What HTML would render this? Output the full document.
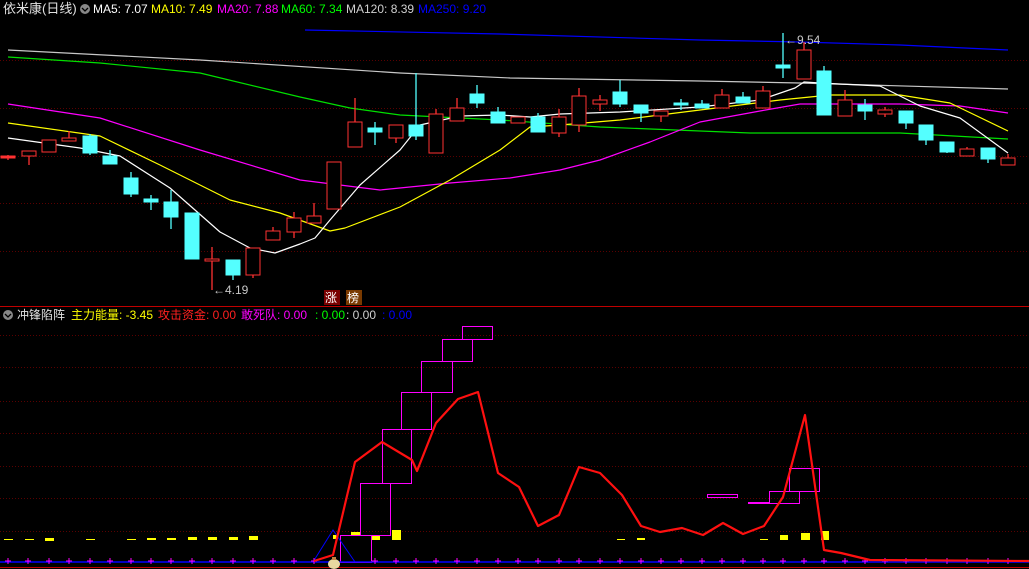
<!DOCTYPE html>
<html><head><meta charset="utf-8"><style>
html,body{margin:0;padding:0;background:#000;width:1029px;height:569px;overflow:hidden}
svg{display:block}
text{font-family:"Liberation Sans","Noto Sans CJK SC",sans-serif}
rect{shape-rendering:crispEdges}
</style></head><body>
<svg width="1029" height="569" viewBox="0 0 1029 569" xmlns="http://www.w3.org/2000/svg">
<rect width="1029" height="569" fill="#000"/>
<g stroke="#5a0000" stroke-width="1" stroke-dasharray="1,2">
<line x1="0" y1="60.5" x2="1029" y2="60.5"/><line x1="0" y1="108.5" x2="1029" y2="108.5"/>
<line x1="0" y1="156.5" x2="1029" y2="156.5"/><line x1="0" y1="203.5" x2="1029" y2="203.5"/>
<line x1="0" y1="251.5" x2="1029" y2="251.5"/>
<line x1="0" y1="335.5" x2="1029" y2="335.5"/><line x1="0" y1="367.5" x2="1029" y2="367.5"/>
<line x1="0" y1="401.5" x2="1029" y2="401.5"/><line x1="0" y1="433.5" x2="1029" y2="433.5"/>
<line x1="0" y1="466.5" x2="1029" y2="466.5"/><line x1="0" y1="498.5" x2="1029" y2="498.5"/>
<line x1="0" y1="531.5" x2="1029" y2="531.5"/>
</g>
<line x1="0" y1="306.5" x2="1029" y2="306.5" stroke="#c00000"/>
<line x1="0" y1="567.5" x2="1029" y2="567.5" stroke="#c00000"/>

<g fill="none" stroke-width="1.2" stroke-linejoin="round">
<polyline stroke="#0000ff" points="305,30 500,34 700,40 800,42 900,45 1008,50"/>
<polyline stroke="#c8c8c8" points="8,50 200,60 400,73 510,78 700,81 800,83 1008,89"/>
<polyline stroke="#00e000" points="8,57 100,63 200,73 300,97 350,108 400,115 500,120 600,127 750,133 900,133 1008,139"/>
<polyline stroke="#ff00ff" points="8,104 100,118 200,150 300,180 380,190 450,183 510,178 560,170 600,160 650,142 700,122 760,111 800,104 900,104 960,106 1008,113"/>
<polyline stroke="#ffff00" points="8,123 100,136 160,165 230,200 280,213 330,231 345,228 400,207 450,180 500,150 530,127 560,125 620,120 700,110 780,100 830,95 900,95 950,103 1008,131"/>
<polyline stroke="#ffffff" points="8,138 80,148 120,156 170,188 220,232 250,248 275,253 300,244 315,238 330,220 360,185 400,150 420,125 460,116 500,115 530,117 560,114 620,112 700,107 760,100 795,88 804,82 820,83 880,86 920,106 960,118 1008,153"/>
</g>

<g stroke-width="1.3">
<g stroke="#ff3232" fill="#000">
<line x1="8" y1="155" x2="8" y2="160"/><rect x="1" y="156" width="14" height="2" fill="#ff3232"/>
<line x1="29" y1="151" x2="29" y2="165"/><rect x="22" y="151" width="14" height="5"/>
<rect x="42" y="140" width="14" height="12"/>
<line x1="69" y1="131" x2="69" y2="141"/><rect x="62" y="138" width="14" height="3"/>
<line x1="212" y1="247" x2="212" y2="290"/><rect x="205" y="259" width="14" height="2"/>
<line x1="253" y1="248" x2="253" y2="278"/><rect x="246" y="248" width="14" height="27"/>
<line x1="273" y1="227" x2="273" y2="240"/><rect x="266" y="231" width="14" height="9"/>
<line x1="294" y1="212" x2="294" y2="238"/><rect x="287" y="218" width="14" height="14"/>
<line x1="314" y1="203" x2="314" y2="223"/><rect x="307" y="216" width="14" height="7"/>
<rect x="327" y="162" width="14" height="47"/>
<line x1="355" y1="98" x2="355" y2="147"/><rect x="348" y="122" width="14" height="25"/>
<line x1="396" y1="125" x2="396" y2="143"/><rect x="389" y="125" width="14" height="13"/>
<line x1="436" y1="109" x2="436" y2="153"/><rect x="429" y="114" width="14" height="39"/>
<line x1="457" y1="98" x2="457" y2="121"/><rect x="450" y="108" width="14" height="13"/>
<rect x="511" y="117" width="14" height="6"/>
<line x1="559" y1="109" x2="559" y2="137"/><rect x="552" y="117" width="14" height="16"/>
<line x1="579" y1="88" x2="579" y2="132"/><rect x="572" y="96" width="14" height="29"/>
<line x1="600" y1="95" x2="600" y2="111"/><rect x="593" y="100" width="14" height="4"/>
<line x1="661" y1="111" x2="661" y2="122"/><rect x="654" y="111" width="14" height="5"/>
<line x1="722" y1="89" x2="722" y2="108"/><rect x="715" y="95" width="14" height="13"/>
<line x1="763" y1="86" x2="763" y2="108"/><rect x="756" y="91" width="14" height="17"/>
<line x1="804" y1="42" x2="804" y2="79"/><rect x="797" y="50" width="14" height="29"/>
<line x1="845" y1="90" x2="845" y2="116"/><rect x="838" y="100" width="14" height="16"/>
<line x1="885" y1="107" x2="885" y2="117"/><rect x="878" y="110" width="14" height="4"/>
<line x1="967" y1="147" x2="967" y2="156"/><rect x="960" y="149" width="14" height="7"/>
<line x1="1008" y1="154" x2="1008" y2="165"/><rect x="1001" y="158" width="14" height="7"/>
</g>
<g stroke="#54ffff" fill="#54ffff">
<line x1="90" y1="134" x2="90" y2="155"/><rect x="83" y="136" width="14" height="17"/>
<line x1="110" y1="150" x2="110" y2="164"/><rect x="103" y="156" width="14" height="8"/>
<line x1="131" y1="172" x2="131" y2="197"/><rect x="124" y="178" width="14" height="16"/>
<line x1="151" y1="195" x2="151" y2="210"/><rect x="144" y="199" width="14" height="3"/>
<line x1="171" y1="190" x2="171" y2="229"/><rect x="164" y="202" width="14" height="15"/>
<rect x="185" y="213" width="14" height="46"/>
<line x1="233" y1="260" x2="233" y2="280"/><rect x="226" y="260" width="14" height="15"/>
<line x1="375" y1="122" x2="375" y2="145"/><rect x="368" y="128" width="14" height="4"/>
<line x1="416" y1="73" x2="416" y2="140"/><rect x="409" y="125" width="14" height="11"/>
<line x1="477" y1="85" x2="477" y2="108"/><rect x="470" y="94" width="14" height="9"/>
<line x1="498" y1="107" x2="498" y2="123"/><rect x="491" y="112" width="14" height="11"/>
<line x1="538" y1="113" x2="538" y2="132"/><rect x="531" y="117" width="14" height="15"/>
<line x1="620" y1="80" x2="620" y2="107"/><rect x="613" y="92" width="14" height="12"/>
<line x1="641" y1="105" x2="641" y2="122"/><rect x="634" y="105" width="14" height="8"/>
<line x1="681" y1="99" x2="681" y2="110"/><rect x="674" y="103" width="14" height="2"/>
<line x1="702" y1="100" x2="702" y2="108"/><rect x="695" y="104" width="14" height="4"/>
<line x1="743" y1="92" x2="743" y2="103"/><rect x="736" y="97" width="14" height="6"/>
<line x1="783" y1="33" x2="783" y2="78"/><rect x="776" y="65" width="14" height="3"/>
<line x1="824" y1="66" x2="824" y2="115"/><rect x="817" y="71" width="14" height="44"/>
<line x1="865" y1="99" x2="865" y2="120"/><rect x="858" y="105" width="14" height="6"/>
<line x1="906" y1="111" x2="906" y2="129"/><rect x="899" y="111" width="14" height="12"/>
<line x1="926" y1="125" x2="926" y2="145"/><rect x="919" y="125" width="14" height="15"/>
<line x1="947" y1="142" x2="947" y2="153"/><rect x="940" y="142" width="14" height="10"/>
<line x1="988" y1="148" x2="988" y2="163"/><rect x="981" y="148" width="14" height="11"/>
</g>
</g>
<g fill="#c8c8c8" font-size="12">
<text x="213" y="294">←4.19</text>
<text x="785" y="44">←9.54</text>
</g>
<rect x="324" y="290" width="16" height="15" fill="#7a0000"/><text x="325" y="302" font-size="12" fill="#fff">涨</text>
<rect x="346" y="290" width="16" height="15" fill="#7a3a00"/><text x="347" y="302" font-size="12" fill="#fff">榜</text>

<text x="3" y="13" font-size="13" fill="#e0e0e0">依米康(日线)</text>
<circle cx="85" cy="9" r="5" fill="#888"/><path d="M82 8 L85 11 L88 8" stroke="#000" stroke-width="1.3" fill="none"/>
<g font-size="12">
<text x="93" y="13" fill="#fff">MA5: 7.07</text>
<text x="151" y="13" fill="#ffff00">MA10: 7.49</text>
<text x="217" y="13" fill="#ff00ff">MA20: 7.88</text>
<text x="281" y="13" fill="#00ff00">MA60: 7.34</text>
<text x="346" y="13" fill="#d0d0d0">MA120: 8.39</text>
<text x="418" y="13" fill="#0000ff">MA250: 9.20</text>
</g>
<circle cx="8" cy="315" r="5" fill="#888"/><path d="M5 314 L8 317 L11 314" stroke="#000" stroke-width="1.3" fill="none"/>
<g font-size="12">
<text x="17" y="319" fill="#e0e0e0">冲锋陷阵</text>
<text x="71" y="319" fill="#ffff00">主力能量: -3.45</text>
<text x="158" y="319" fill="#ff2020">攻击资金: 0.00</text>
<text x="241" y="319" fill="#ff00ff">敢死队: 0.00</text>
<text x="315" y="319" fill="#00ff00">: 0.00</text>
<text x="346" y="319" fill="#d0d0d0">: 0.00</text>
<text x="382" y="319" fill="#0000ff">: 0.00</text>
</g>

<g fill="#ffff00">
<rect x="4" y="539" width="9" height="1"/><rect x="25" y="539" width="9" height="1"/><rect x="45" y="538" width="9" height="3"/>
<rect x="86" y="539" width="9" height="1"/><rect x="127" y="539" width="9" height="1"/><rect x="147" y="538" width="9" height="2"/>
<rect x="167" y="538" width="9" height="2"/><rect x="188" y="537" width="9" height="3"/><rect x="208" y="537" width="9" height="3"/>
<rect x="229" y="537" width="9" height="3"/><rect x="249" y="536" width="9" height="4"/>
<rect x="333" y="535" width="5" height="4"/><rect x="351" y="532" width="9" height="3"/><rect x="371" y="535" width="9" height="5"/><rect x="392" y="530" width="9" height="10"/>
<rect x="617" y="539" width="8" height="1"/><rect x="637" y="538" width="8" height="2"/><rect x="760" y="539" width="8" height="1"/>
<rect x="780" y="535" width="8" height="5"/><rect x="801" y="533" width="9" height="7"/><rect x="821" y="531" width="8" height="9"/>
</g>
<g fill="none" stroke="#ff00ff" stroke-width="1">
<rect x="340.5" y="535.5" width="31" height="27"/>
<rect x="360.5" y="483.5" width="30" height="52"/>
<rect x="382.5" y="429.5" width="29" height="54"/>
<rect x="401.5" y="392.5" width="30" height="37"/>
<rect x="421.5" y="361.5" width="31" height="31"/>
<rect x="442.5" y="339.5" width="30" height="22"/>
<rect x="462.5" y="326.5" width="30" height="13"/>
<rect x="707.5" y="494.5" width="30" height="3"/>
<line x1="748" y1="503" x2="769" y2="503" stroke-width="2"/>
<rect x="769.5" y="491.5" width="30" height="12"/>
<rect x="789.5" y="468.5" width="30" height="23"/>
</g>
<line x1="0" y1="562" x2="1029" y2="562" stroke="#0000ff" stroke-width="1.5"/>
<polyline points="313,562 333,530 355,562" fill="none" stroke="#0000ff" stroke-width="1"/>
<g stroke="#ff00ff" stroke-width="1">
<path d="M8 558v6M5 561h6M28 558v6M25 561h6M49 558v6M46 561h6M69 558v6M66 561h6M90 558v6M87 561h6M110 558v6M107 561h6M131 558v6M128 561h6M151 558v6M148 561h6M171 558v6M168 561h6M192 558v6M189 561h6M212 558v6M209 561h6M233 558v6M230 561h6M253 558v6M250 561h6M273 558v6M270 561h6M294 558v6M291 561h6M314 558v6M311 561h6M375 558v6M372 561h6M396 558v6M393 561h6M416 558v6M413 561h6M436 558v6M433 561h6M457 558v6M454 561h6M477 558v6M474 561h6M498 558v6M495 561h6M518 558v6M515 561h6M538 558v6M535 561h6M559 558v6M556 561h6M579 558v6M576 561h6M600 558v6M597 561h6M620 558v6M617 561h6M641 558v6M638 561h6M661 558v6M658 561h6M681 558v6M678 561h6M702 558v6M699 561h6M722 558v6M719 561h6M743 558v6M740 561h6M763 558v6M760 561h6M783 558v6M780 561h6M804 558v6M801 561h6M824 558v6M821 561h6M845 558v6M842 561h6M865 558v6M862 561h6M885 558v6M882 561h6M906 558v6M903 561h6M926 558v6M923 561h6M947 558v6M944 561h6M967 558v6M964 561h6M988 558v6M985 561h6M1008 558v6M1005 561h6"/>
</g>
<polyline fill="none" stroke="#ff1010" stroke-width="2.2" stroke-linejoin="round" points="314,561 333,555 355,462 382,442 412,460 417,471 436,423 458,399 478,392 498,473 519,487 538,526 559,515 579,467 600,473 622,495 641,526 660,532 682,528 703,535 723,523 743,534 764,526 783,497 805,415 824,550 841,553 870,560 1029,561"/>
<ellipse cx="334" cy="564" rx="6" ry="5" fill="#e8d8a0"/><rect x="332" y="557" width="4" height="3" fill="#c08040"/>
</svg>
</body></html>
